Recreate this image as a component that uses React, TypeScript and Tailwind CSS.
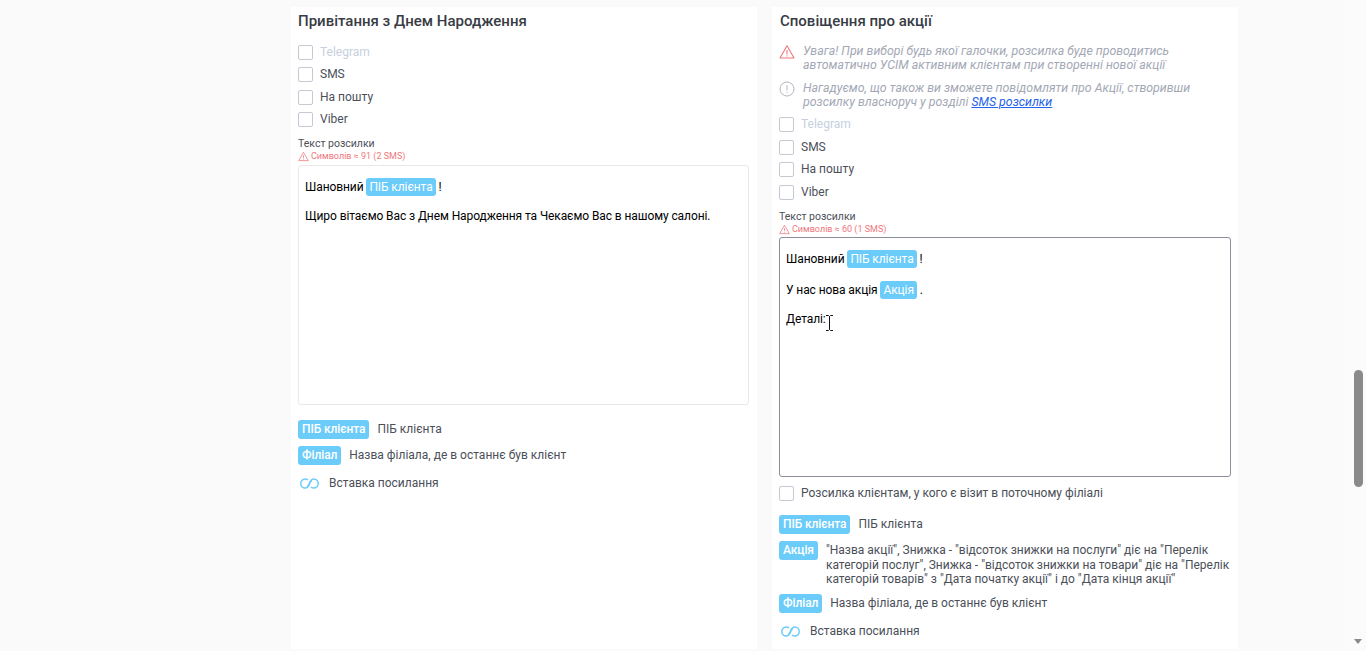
import React from 'react';

const Tag = ({ children, big }: { children: React.ReactNode; big?: boolean }) => (
  <span className={`inline-block shrink-0 rounded-[3px] bg-[#6bcbf9] text-[12px] tracking-[-0.1px] text-white ${big ? 'h-[19px] px-[4px] font-medium leading-[19px]' : 'h-[18px] px-[3px] leading-[18px]'}`}>
    {children}
  </span>
);

const Check = ({ label, muted }: { label: string; muted?: boolean }) => (
  <label className="flex h-[22.5px] items-center gap-[7px]">
    <span className="h-[15px] w-[15px] rounded-[2px] border border-[#c5c9d3] bg-white" />
    <span className={muted ? 'text-[#c6d0de]' : 'text-[#4b4f58]'}>{label}</span>
  </label>
);

const Channels = () => (
  <div className="flex flex-col">
    <Check label="Telegram" muted />
    <Check label="SMS" />
    <Check label="На пошту" />
    <Check label="Viber" />
  </div>
);

const WarnIcon = ({ size }: { size: number }) => (
  <svg width={size} height={size} viewBox="0 0 16 16" fill="none" stroke="#f0777d" strokeWidth="1.1" strokeLinejoin="round" className="shrink-0">
    <path d="M8 1.800 15 14H1L8 1.800Z" />
    <path d="M8 6v4.400M8 11.600v.9" />
  </svg>
);

const LinkIcon = () => (
  <svg width="19" height="11" viewBox="0 0 19 11" fill="none" stroke="#6bcbf9" strokeWidth="1.5" strokeLinecap="round" className="shrink-0">
    <path d="M7.500 1.600C6.800 1.200 6 1 5.200 1 2.800 1 .8 3 .8 5.500S2.800 10 5.200 10C7.800 10 9 7 9.500 5.500 9.800 4.600 10.400 3.600 11.300 2.900" />
    <path d="M11.500 9.400c.7.400 1.500.6 2.300.6 2.400 0 4.400-2 4.400-4.500S16.200 1 13.800 1C11.200 1 10 4 9.500 5.500 9.200 6.400 8.600 7.400 7.700 8.100" />
  </svg>
);

const Counter = ({ text }: { text: string }) => (
  <div className="mt-[1px] flex h-[11px] items-center gap-[2px] text-[9px] leading-[11px] text-[#f0777d]">
    <WarnIcon size={11} />
    <span>{text}</span>
  </div>
);

const Legend = ({ tag, children, className }: { tag: string; children: React.ReactNode; className?: string }) => (
  <div className={`flex items-start gap-2 ${className ?? ''}`}>
    <Tag big>{tag}</Tag>
    <span className="pt-[2px] leading-[14.5px] whitespace-nowrap text-[#4b4f58]">{children}</span>
  </div>
);

const InsertLink = ({ className }: { className: string }) => (
  <div className={`flex items-center gap-[10px] pl-[2px] text-[#4b4f58] ${className}`}>
    <LinkIcon />
    <span>Вставка посилання</span>
  </div>
);

export default function App() {
  return (
    <div className="flex h-[651px] overflow-hidden bg-[#fafafa] font-['Roboto',sans-serif] text-[12px] leading-[15px]">
      <main className="flex flex-1 gap-[15px] pt-[7px] pb-[2px] pl-[291px]">
        {/* Привітання */}
        <section className="flex w-[466px] flex-col bg-white px-[7px]">
          <h2 className="mt-[6px] mb-[12px] text-[15px] leading-[16px] font-medium text-[#383c44]">Привітання з Днем Народження</h2>
          <Channels />
          <div className="mt-[6px] text-[10.5px] leading-[13px] text-[#4b4f58]">Текст розсилки</div>
          <Counter text="Символів ≈ 91 (2 SMS)" />
          <div className="mt-[3px] h-[240px] w-[451px] rounded-[3px] border border-[#e8e8e8] px-[6px] py-[12px] tracking-[-0.09px] text-black">
            <p>Шановний <Tag>ПІБ клієнта</Tag> !</p>
            <p className="mt-[13px]">Щиро вітаємо Вас з Днем Народження та Чекаємо Вас в нашому салоні.</p>
          </div>
          <Legend tag="ПІБ клієнта" className="mt-[15px]">ПІБ клієнта</Legend>
          <Legend tag="Філіал" className="mt-[7px]">Назва філіала, де в останнє був клієнт</Legend>
          <InsertLink className="mt-[11px]" />
        </section>

        {/* Акції */}
        <section className="flex w-[466px] flex-col bg-white px-[7px]">
          <h2 className="mt-[6px] mb-[15px] pl-[1px] text-[15px] leading-[16px] font-medium text-[#383c44]">Сповіщення про акції</h2>
          <div className="flex gap-[8px] text-[12.35px] text-[#a3a8b5] italic">
            <WarnIcon size={16} />
            <p className="leading-[14px]">Увага! При виборі будь якої галочки, розсилка буде проводитись<br />автоматично УСІМ активним клієнтам при створенні нової акції</p>
          </div>
          <div className="mt-[9px] flex gap-[8px] text-[12.35px] text-[#a3a8b5] italic">
            <svg width="16" height="16" viewBox="0 0 16 16" fill="none" stroke="#b3b6bf" strokeWidth="1" className="shrink-0">
              <circle cx="8" cy="8" r="7" />
              <path d="M8 4v5.500M8 11v1" />
            </svg>
            <p className="leading-[14px]">Нагадуємо, що також ви зможете повідомляти про Акції, створивши<br />розсилку власноруч у розділі <a className="text-[#2563eb] underline">SMS розсилки</a></p>
          </div>
          <div className="mt-[4.5px]"><Channels /></div>
          <div className="mt-[6.5px] text-[10.5px] leading-[13px] text-[#4b4f58]">Текст розсилки</div>
          <Counter text="Символів ≈ 60 (1 SMS)" />
          <div className="relative mt-[2px] h-[240px] w-[452px] rounded-[3px] border border-[#8b8f99] px-[6px] py-[12px] tracking-[-0.09px] text-black">
            <p>Шановний <Tag>ПІБ клієнта</Tag> !</p>
            <p className="mt-[13px]">У нас нова акція <Tag>Акція</Tag> .</p>
            <p className="mt-[13px]">Деталі:</p>
            <svg width="7" height="16" viewBox="0 0 7 16" fill="none" stroke="#111" strokeWidth="1" className="absolute top-[77px] left-[46px]">
              <path d="M0 .5h2.500l1 1 1-1H7M3.500 1.500v13M0 15.500h2.500l1-1 1 1H7" />
            </svg>
          </div>
          <div className="mt-[5.5px]"><Check label="Розсилка клієнтам, у кого є візит в поточному філіалі" /></div>
          <Legend tag="ПІБ клієнта" className="mt-[10px]">ПІБ клієнта</Legend>
          <Legend tag="Акція" className="mt-[7px]">"Назва акції", Знижка - "відсоток знижки на послуги" діє на "Перелік<br />категорій послуг", Знижка - "відсоток знижки на товари" діє на "Перелік<br />категорій товарів" з "Дата початку акції" і до "Дата кінця акції"</Legend>
          <Legend tag="Філіал" className="mt-[7.5px]">Назва філіала, де в останнє був клієнт</Legend>
          <InsertLink className="mt-[10.5px]" />
        </section>
      </main>

      {/* scrollbar */}
      <div className="relative w-[15px] shrink-0 bg-[#fbfbfb]">
        <div className="absolute top-[370px] left-[3px] h-[117px] w-[9px] rounded-[5px] bg-[#8a8a8a]" />
        <div className="absolute bottom-[7px] left-[3px] h-0 w-0 border-x-[4.500px] border-t-[5px] border-x-transparent border-t-[#8a8a8a]" />
      </div>
    </div>
  );
}
